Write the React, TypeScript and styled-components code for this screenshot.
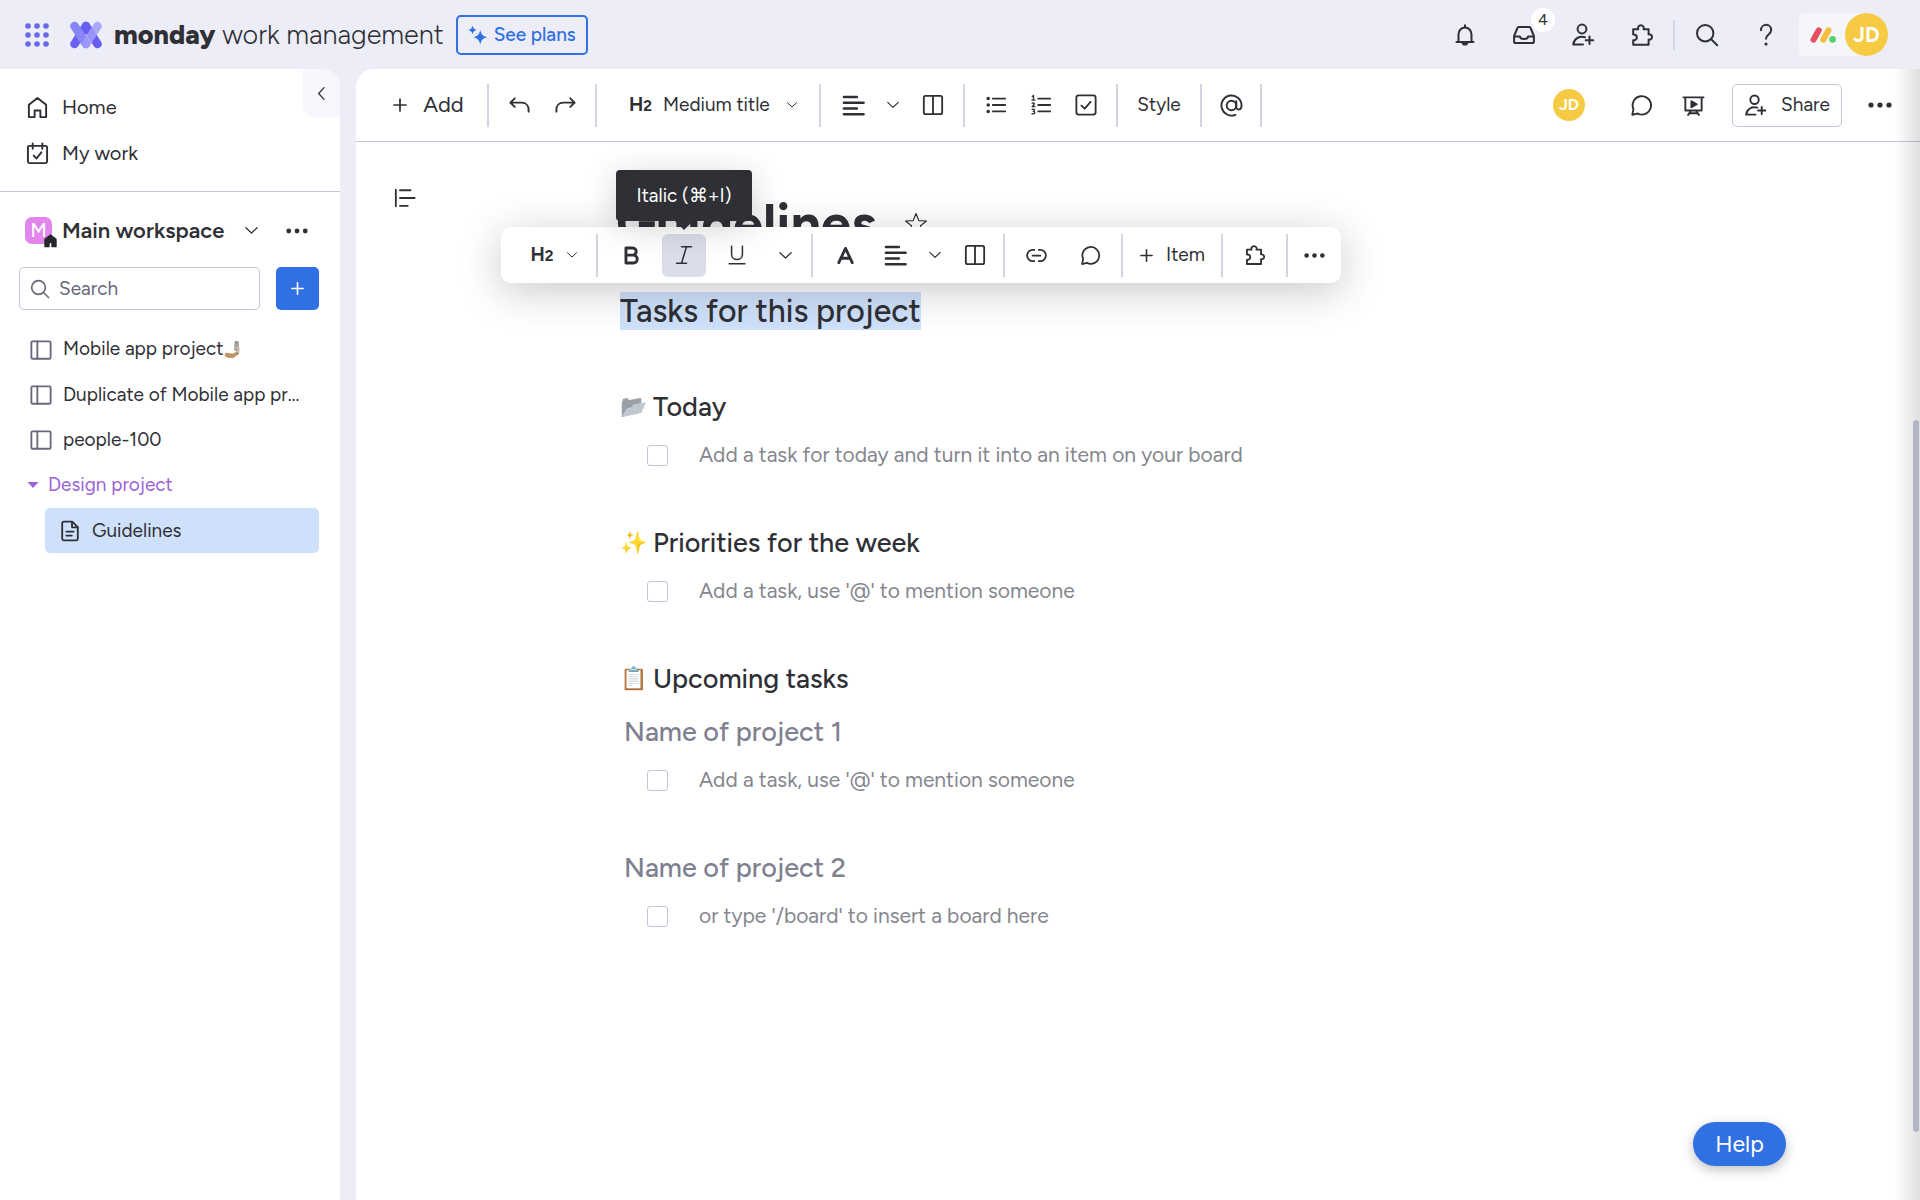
import React from "react";
import styled, { createGlobalStyle, css } from "styled-components";

const color = {
  ink: "#2f3035",
  muted: "#676879",
  placeholder: "#85868e",
  heading: "#7f8090",
  frame: "#ecedf7",
  line: "#d4d5e4",
  field: "#c3c5d9",
  blue: "#2f70e3",
  selected: "#cfe1fa",
  yellow: "#f6ca42",
  purple: "#9d63d6",
};

const GlobalStyle = createGlobalStyle`
  * { box-sizing: border-box; }
  body {
    margin: 0;
    font-family: Figtree, Lato, "Liberation Sans", sans-serif;
    font-size: 19px;
    line-height: 24px;
    font-variant-ligatures: none;
    color: ${color.ink};
    background: ${color.frame};
    -webkit-font-smoothing: antialiased;
  }
  button, input, select { font: inherit; color: inherit; }
  button { cursor: pointer; }
  h1, h2, h3, p { margin: 0; }
`;

/* ---------- icons ---------- */

const Svg = styled.svg<{ $size?: number }>`
  width: ${(p) => p.$size ?? 24}px;
  height: ${(p) => p.$size ?? 24}px;
  flex: none;
  display: block;
  fill: none;
  stroke: currentColor;
  stroke-width: 2;
  stroke-linecap: round;
  stroke-linejoin: round;
`;

type IconProps = { size?: number };
const icon =
  (body: React.ReactNode) =>
  ({ size }: IconProps) => (
    <Svg viewBox="0 0 24 24" $size={size} aria-hidden="true">
      {body}
    </Svg>
  );

const Dot = ({ x, y, r = 2 }: { x: number; y: number; r?: number }) => (
  <circle cx={x} cy={y} r={r} fill="currentColor" stroke="none" />
);

const BellIcon = icon(
  <>
    <path d="M3.5 19h17M5.5 19v-7.500a6.500 7 0 0 1 13 0V19M12 2.200v2" />
    <path d="M9.500 19.500c.4 2.600 4.600 2.600 5 0z" fill="currentColor" />
  </>
);
const InboxIcon = icon(
  <>
    <path d="M6.800 4h10.400a1.500 1.500 0 0 1 1.400 1l3.300 8v5.400a1.600 1.600 0 0 1-1.600 1.600H3.700a1.600 1.600 0 0 1-1.600-1.600V13l3.300-8a1.500 1.500 0 0 1 1.400-1z" />
    <path d="M2.400 13.400h5.400c.4 3.600 8 3.600 8.400 0h5.400" />
  </>
);
const InviteIcon = icon(
  <>
    <circle cx="11" cy="6" r="4.400" />
    <path d="M14 14.200c-6-1.400-11 1.400-11.800 7.300H12" />
    <path d="M18.500 13.500v7.600M14.700 17.300h7.600" />
  </>
);
const PuzzleIcon = icon(
  <path d="M3.200 6.200h5a2.900 2.900 0 1 1 5.400 0h5v5.200a2.700 2.700 0 1 1 0 5.200v5.200H3.200v-4.600a2.900 2.900 0 1 0 0-5.600z" />
);
const SearchIcon = icon(
  <>
    <circle cx="10.200" cy="10.200" r="8.200" />
    <path d="M16.200 16.200l6 6" />
  </>
);
const QuestionIcon = icon(
  <>
    <path d="M7 7.200C7.200 0 17.200.2 17.200 7c0 4.600-5.200 4.400-5.200 8.800" />
    <Dot x={12} y={21} r={1.6} />
  </>
);
const HomeIcon = icon(<path d="M3 22V9.200L12 2l9 7.200V22h-6v-6.800H9V22z" />);
const MyWorkIcon = icon(
  <>
    <rect x="2" y="4" width="20" height="18" rx="1.600" />
    <path d="M7 1.600V7M17 1.600V7M8 14.200l3 3 5-6.400" />
  </>
);
const ChevronDown = icon(<path d="M3 7.500l9 8.500 9-8.500" />);
const ChevronLeft = icon(<path d="M16 2.500L7.500 12l8.500 9.500" />);
const PlusIcon = icon(<path strokeWidth="2.600" d="M12 3v18M3 12h18" />);
const DotsIcon = icon(
  <>
    <Dot x={3} y={12} r={2.600} />
    <Dot x={12} y={12} r={2.600} />
    <Dot x={21} y={12} r={2.600} />
  </>
);
const BoardIcon = icon(
  <>
    <rect x="1.500" y="2.500" width="21" height="19" rx="1.400" />
    <path d="M8 2.500v19" />
  </>
);
const DocIcon = icon(
  <>
    <path d="M14.500 1.800H5.200c-1 0-1.700.7-1.700 1.700v17c0 1 .7 1.700 1.700 1.700h13.600c1 0 1.700-.7 1.700-1.700V7.800z" />
    <path d="M14.200 2v6h6M8 12.600h8M8 17h6" />
  </>
);
const UndoIcon = icon(<path d="M7 4.500L2.500 9 7 13.500M2.500 9h11.800c4.200 0 7.200 3 7.200 7.400v2" />);
const RedoIcon = icon(<path d="M17 4.500L21.500 9 17 13.500M21.500 9H9.700C5.500 9 2.500 12 2.500 16.400v2" />);
const AlignIcon = icon(
  <path strokeWidth="2.600" d="M2 3.200h13.500M2 9.200h20.500M2 15.200h13.500M2 21.200h20.500" />
);
const ColumnsIcon = icon(
  <>
    <rect x="2" y="2" width="20" height="20" rx="1.800" />
    <path d="M12 2v20" />
  </>
);
const BulletsIcon = icon(
  <>
    <Dot x={3.500} y={5} r={1.900} />
    <Dot x={3.500} y={12} r={1.900} />
    <Dot x={3.500} y={19} r={1.900} />
    <path d="M8.500 5H22M8.500 12H22M8.500 19H22" />
  </>
);
const NumbersIcon = icon(
  <>
    <path d="M9 5h13M9 12h13M9 19h13" />
    <path
      strokeWidth="1.500"
      d="M2.500 2.500l1.300-.8v5M2.200 6.700h3.200M2.400 10c2.600-1 3.200.600 0 3.800h3M2.300 16.800c3.400-.8 3 2 1.200 2.200 2.400 0 2.600 3.200-1.300 2.600"
    />
  </>
);
const CheckboxIcon = icon(
  <>
    <rect x="1.500" y="1.500" width="21" height="21" rx="2.600" />
    <path d="M7 12.600l3.600 3.400 6.400-7.400" />
  </>
);
const CommentIcon = icon(<path d="M3.600 15.800A9.600 9.600 0 1 1 8 20.400l-5.600 1.400z" />);
const PresentIcon = icon(
  <>
    <path d="M1.500 3.500h21M3.500 3.500v13.700h17V3.500M9.400 17.500l-3 4.300M14.600 17.500l3 4.300M9 20h6" />
    <path d="M9.800 7.600l5.600 3.100-5.600 3.100z" fill="currentColor" />
  </>
);
const MentionIcon = icon(
  <>
    <circle cx="12" cy="12" r="5" />
    <path d="M17 7.500v5.700c0 4.400 5.500 3.800 5.500-1.200A10.500 10.500 0 1 0 16 21.700" />
  </>
);
const OutlineIcon = icon(<path d="M2 3v18M6.500 3.500H18M6.500 12H22.500M6.500 20.500h8.500" />);
const StarIcon = icon(
  <path
    strokeWidth="1.200"
    d="M12 1.500l2.800 7.100 7.700.4-6 4.800 2.100 7.700-6.600-4.300-6.600 4.300 2.100-7.700-6-4.800 7.700-.4z"
  />
);
const ItalicIcon = icon(<path strokeWidth="1.800" d="M9 2h12M3 22h12M15 2L9 22" />);
const UnderlineIcon = icon(
  <path strokeWidth="1.800" d="M5.500 1.500v9.500c0 8.500 13 8.500 13 0V1.500M2.500 22.500h19" />
);
const BoldIcon = icon(
  <path strokeWidth="3.600" d="M5 2.500h8.500c6 0 6 9 0 9H5zM5 11.500h9.300c6.600 0 6.600 10 0 10H5z" />
);
const TextColorIcon = icon(<path strokeWidth="3.600" d="M3.500 21L12 3l8.500 18M7 15.500h10" />);
const LinkIcon = icon(
  <path d="M9.500 5.500H7.800a6.500 6.500 0 0 0 0 13h1.700M14.500 5.500h1.700a6.500 6.500 0 0 1 0 13h-1.700M7.500 12h9" />
);
const AppsIcon = () => (
  <Svg viewBox="0 0 24 24" aria-hidden="true">
    {[3, 12, 21].map((y) =>
      [3, 12, 21].map((x) => (
        <circle key={`${x}-${y}`} cx={x} cy={y} r={2.8} fill="#6c66ea" stroke="none" />
      ))
    )}
  </Svg>
);
const ProductLogo = () => (
  <Svg viewBox="0 0 34 34" $size={34} aria-hidden="true">
    <g strokeWidth="8.600">
      <path d="M17 8L5.500 26" stroke="#6a62ee" />
      <path d="M17 8l11.500 18" stroke="#655eee" />
      <path d="M5.500 8L17 26" stroke="#8885f6" />
      <path d="M28.500 8L17 26" stroke="#a09cfa" opacity=".85" />
    </g>
  </Svg>
);
const AccountLogo = () => (
  <Svg viewBox="0 0 26 16" $size={26} aria-hidden="true">
    <g strokeWidth="6">
      <path d="M3.500 12.700l5.300-9.400" stroke="#e5505f" />
      <path d="M13.200 12.700l5.300-9.400" stroke="#f4bd3c" />
    </g>
    <circle cx="22.600" cy="12.400" r="3.300" fill="#55d166" stroke="none" />
  </Svg>
);
const SparkleIcon = () => (
  <Svg viewBox="0 0 22 22" $size={20} aria-hidden="true">
    <g fill="currentColor" stroke="none">
      <path d="M13.500 5.500c1.100 5 2.600 6.600 7.500 8-4.900 1.400-6.400 3-7.500 8-1.100-5-2.600-6.600-7.500-8 4.900-1.400 6.400-3 7.500-8z" />
      <path d="M5 .5c.7 3 1.600 3.900 4.500 4.900C6.600 6.400 5.700 7.300 5 10.300 4.300 7.300 3.400 6.400.5 5.400 3.400 4.400 4.300 3.500 5 .5z" />
    </g>
  </Svg>
);
const HomeBadgeIcon = () => (
  <Svg viewBox="0 0 14 15" $size={15} aria-hidden="true">
    <path d="M7 2l5.500 4.200v7.300h-4v-4h-3v4h-4V6.200z" fill="#26272c" stroke="#26272c" strokeWidth="1.400" />
  </Svg>
);
const CaretIcon = () => (
  <Svg viewBox="0 0 12 12" $size={12} aria-hidden="true">
    <path d="M.5 3h11L6 9z" fill="currentColor" stroke="none" />
  </Svg>
);

/* ---------- shared parts ---------- */

const plain = css`
  display: flex;
  align-items: center;
  justify-content: center;
  padding: 0;
  border: 0;
  background: none;
`;

const IconButton = styled.button<{ $w?: number; $active?: boolean }>`
  ${plain}
  position: relative;
  flex: none;
  width: ${(p) => p.$w ?? 44}px;
  height: 43px;
  border-radius: 6px;
  background: ${(p) => (p.$active ? "#dcddea" : "none")};
`;

const Avatar = styled.span<{ $size: number; $text: number }>`
  display: grid;
  place-items: center;
  flex: none;
  width: ${(p) => p.$size}px;
  height: ${(p) => p.$size}px;
  border-radius: 50%;
  background: ${color.yellow};
  color: #fff;
  font-size: ${(p) => p.$text}px;
  font-weight: 700;
`;

const Separator = styled.span<{ $ml?: number; $mr?: number }>`
  flex: none;
  width: 2px;
  height: 43px;
  margin: 0 ${(p) => p.$mr ?? 0}px 0 ${(p) => p.$ml ?? 0}px;
  background: ${color.line};
`;

const Spacer = styled.span<{ $w?: number }>`
  width: ${(p) => p.$w ?? 9}px;
`;

const HeadingMark = styled.span`
  font-weight: 700;
  font-size: 19px;
  small { font-size: 15px; }
`;

/* ---------- header ---------- */

const Page = styled.div`
  display: flex;
  flex-direction: column;
  height: 100vh;
`;

const Header = styled.header`
  display: flex;
  align-items: center;
  justify-content: space-between;
  flex: none;
  height: 69px;
  padding: 0 32px 0 25px;
`;

const Group = styled.div<{ $gap?: number }>`
  display: flex;
  align-items: center;
  gap: ${(p) => p.$gap ?? 0}px;
`;

const AppsButton = styled.button`
  ${plain}
  margin-right: 20px;
`;

const Brand = styled.a`
  display: flex;
  align-items: center;
  gap: 11px;
  color: inherit;
  text-decoration: none;
  font-size: 27px;
  line-height: 36px;
  font-weight: 300;
  white-space: nowrap;
  b { font-weight: 800; }
`;

const PlansButton = styled.button`
  ${plain}
  gap: 6px;
  height: 40px;
  margin-left: 12px;
  padding: 0 10px;
  border: 2px solid ${color.blue};
  border-radius: 5px;
  color: ${color.blue};
  font-weight: 500;
`;

const HeaderButton = styled.button`
  ${plain}
  position: relative;
  width: 59px;
  height: 40px;
`;

const Badge = styled.span`
  position: absolute;
  top: -7px;
  right: -2px;
  display: grid;
  place-items: center;
  width: 24px;
  height: 24px;
  border-radius: 50%;
  background: #fff;
  font-size: 16px;
`;

const HeaderRule = styled.span`
  width: 2px;
  height: 30px;
  margin: 0 2px;
  background: #d3d7e8;
`;

const Account = styled.button`
  ${plain}
  gap: 9px;
  margin-left: 4px;
  padding-left: 11px;
  border-radius: 6px 24px 24px 6px;
  background: #f5f6fb;
`;

/* ---------- sidebar ---------- */

const Body = styled.div`
  display: flex;
  gap: 16px;
  flex: 1;
  min-height: 0;
`;

const Sidebar = styled.aside`
  flex: none;
  width: 340px;
  background: #fff;
  border-radius: 0 18px 0 0;
  overflow: hidden;
`;

const SidebarTop = styled.div`
  display: flex;
  align-items: flex-start;
  justify-content: space-between;
  height: 123px;
  border-bottom: 1px solid ${color.field};
`;

const MainNav = styled.nav`
  display: flex;
  flex-direction: column;
  padding: 15px 0 0 26px;
`;

const NavLink = styled.a`
  display: flex;
  align-items: center;
  gap: 13px;
  height: 46px;
  color: inherit;
  text-decoration: none;
  font-size: 20px;
`;

const Collapse = styled.button`
  ${plain}
  width: 37px;
  height: 48px;
  border-radius: 0 0 0 12px;
  background: #f6f7fc;
`;

const WorkspaceRow = styled.div`
  display: flex;
  align-items: center;
  height: 75px;
  padding: 2px 31px 0 25px;
`;

const WorkspaceButton = styled.button`
  ${plain}
  flex: 1;
  justify-content: flex-start;
  font-size: 22px;
  line-height: 28px;
  font-weight: 600;
  white-space: nowrap;
`;

const WorkspaceMark = styled.span`
  position: relative;
  display: grid;
  place-items: center;
  width: 27px;
  height: 27px;
  margin-right: 10px;
  border-radius: 7px;
  background: #e285ec;
  color: #fff;
  font-size: 19px;
  font-weight: 500;
`;

const HomeBadge = styled.span`
  position: absolute;
  right: -6px;
  bottom: -4px;
`;

const WorkspaceName = styled.span`
  margin-right: 20px;
`;

const SearchRow = styled.div`
  display: flex;
  gap: 16px;
  padding: 0 21px 0 19px;
`;

const SearchField = styled.label`
  display: flex;
  align-items: center;
  gap: 9px;
  flex: 1;
  min-width: 0;
  height: 43px;
  padding: 0 10px;
  border: 1px solid ${color.field};
  border-radius: 5px;
  color: ${color.muted};
  input {
    min-width: 0;
    width: 100%;
    padding: 0;
    border: 0;
    outline: 0;
    background: none;
  }
  input::placeholder { color: ${color.muted}; opacity: 1; }
`;

const AddBoard = styled.button`
  ${plain}
  flex: none;
  width: 43px;
  height: 43px;
  border-radius: 5px;
  background: ${color.blue};
  color: #fff;
`;

const BoardList = styled.nav`
  display: flex;
  flex-direction: column;
  padding: 17px 21px 0 20px;
`;

const BoardLink = styled.a<{ $selected?: boolean }>`
  display: flex;
  align-items: center;
  gap: 11px;
  height: 45px;
  margin-left: ${(p) => (p.$selected ? 25 : 0)}px;
  padding: 0 14px 0 ${(p) => (p.$selected ? 14 : 10)}px;
  border-radius: 5px;
  background: ${(p) => (p.$selected ? color.selected : "none")};
  color: inherit;
  text-decoration: none;
  svg { color: ${(p) => (p.$selected ? color.ink : color.muted)}; }
`;

const BoardName = styled.span`
  overflow: hidden;
  text-overflow: ellipsis;
  white-space: nowrap;
`;

const InlineEmoji = styled.span`
  display: inline-block;
  font-size: 16px;
  filter: grayscale(0.6);
`;

const Folder = styled.button`
  ${plain}
  justify-content: flex-start;
  gap: 9px;
  height: 46px;
  padding-left: 7px;
  color: ${color.purple};
`;

/* ---------- document ---------- */

const Main = styled.main`
  position: relative;
  display: flex;
  flex-direction: column;
  flex: 1;
  min-width: 0;
  background: #fff;
  border-radius: 18px 0 0 0;
  overflow: hidden;
`;

const Toolbar = styled.div`
  display: flex;
  align-items: center;
  justify-content: space-between;
  flex: none;
  height: 73px;
  padding: 0 18px 0 33px;
  border-bottom: 1px solid ${color.field};
`;

const AddButton = styled.button`
  ${plain}
  gap: 15px;
  width: 78px;
  font-size: 22px;
`;

const StyleSelect = styled.label`
  display: flex;
  align-items: center;
  gap: 11px;
  width: 170px;
  margin: 0 20px 0 32px;
  select {
    appearance: none;
    width: 112px;
    padding: 0;
    border: 0;
    background: none;
  }
`;

const TextButton = styled.button`
  ${plain}
  width: 82px;
  height: 43px;
`;

const ShareButton = styled.button`
  ${plain}
  gap: 14px;
  width: 110px;
  height: 43px;
  margin: 0 16px 0 17px;
  border: 1px solid ${color.field};
  border-radius: 5px;
`;

const Canvas = styled.div`
  display: flex;
  align-items: flex-start;
  flex: 1;
  min-height: 0;
`;

const OutlineButton = styled.button`
  ${plain}
  flex: none;
  width: 44px;
  height: 44px;
  margin: 34px 0 0 27px;
`;

const Article = styled.article`
  position: relative;
  flex: 1;
  min-width: 0;
  margin-right: 71px;
  padding: 48px 0 0 193px;
`;

const TitleRow = styled.div`
  display: flex;
  align-items: center;
  gap: 28px;
  margin-left: -4px;
  height: 68px;
`;

const Title = styled.h1`
  font-size: 54px;
  line-height: 68px;
  font-weight: 700;
`;

const Subtitle = styled.h2`
  margin: 34px 0 9px;
  font-size: 32px;
  line-height: 38px;
  font-weight: 500;
  span {
    display: inline-block;
    background: ${color.selected};
  }
`;

const Section = styled.section<{ $tight?: boolean }>`
  padding-top: ${(p) => (p.$tight ? 11 : 47)}px;
`;

const SectionHeading = styled.h3<{ $muted?: boolean }>`
  display: flex;
  align-items: center;
  gap: 6px;
  padding-left: ${(p) => (p.$muted ? 4 : 0)}px;
  font-size: 27px;
  line-height: 42px;
  font-weight: 500;
  color: ${(p) => (p.$muted ? color.heading : color.ink)};
`;

const Emoji = styled.span<{ $gray?: boolean }>`
  display: grid;
  place-items: center;
  width: 27px;
  font-size: 22px;
  filter: ${(p) => (p.$gray ? "grayscale(1) sepia(0.2) hue-rotate(165deg) brightness(0.85)" : "none")};
`;

const Task = styled.label`
  display: flex;
  align-items: center;
  gap: 31px;
  height: 40px;
  margin-top: 7px;
  padding-left: 27px;
  color: ${color.placeholder};
  font-size: 21px;
  line-height: 40px;
  input {
    appearance: none;
    flex: none;
    width: 21px;
    height: 21px;
    margin: 0;
    border: 1px solid ${color.field};
    border-radius: 3px;
    background: #fff;
  }
`;

const FloatingBar = styled.div`
  position: absolute;
  top: 85px;
  left: 74px;
  display: flex;
  align-items: center;
  height: 56px;
  padding: 0 5px 0 30px;
  border-radius: 10px;
  background: #fff;
  box-shadow: 0 8px 40px rgba(30, 31, 40, 0.24);
`;

const LevelSelect = styled.button`
  ${plain}
  gap: 13px;
  width: 47px;
  height: 43px;
`;

const ItemButton = styled.button`
  ${plain}
  gap: 12px;
  width: 98px;
  height: 43px;
`;

const Tooltip = styled.span`
  position: absolute;
  bottom: 56px;
  left: 50%;
  transform: translateX(-50%);
  width: 136px;
  height: 51px;
  border-radius: 4px;
  background: ${color.ink};
  color: #fff;
  line-height: 51px;
  text-align: center;
  box-shadow: 0 6px 32px rgba(30, 31, 40, 0.2);
  &::after {
    content: "";
    position: absolute;
    left: 50%;
    bottom: -9px;
    transform: translateX(-50%);
    border: solid transparent;
    border-width: 9px 9px 0;
    border-top-color: ${color.ink};
  }
`;

const HelpButton = styled.button`
  ${plain}
  position: absolute;
  right: 134px;
  bottom: 34px;
  width: 93px;
  height: 44px;
  border-radius: 22px;
  background: ${color.blue};
  color: #fff;
  font-size: 23px;
  box-shadow: 0 4px 12px rgba(30, 31, 40, 0.28);
`;

const EdgeShade = styled.div`
  position: absolute;
  inset: 0 0 0 auto;
  width: 26px;
  background: linear-gradient(to right, rgba(0, 0, 0, 0), rgba(0, 0, 0, 0.12));
  pointer-events: none;
`;

const ScrollThumb = styled.div`
  position: absolute;
  top: 31%;
  right: 1px;
  width: 6px;
  height: 63%;
  border-radius: 3px;
  background: #b3b4c6;
`;

const TaskRow = ({ text }: { text: string }) => (
  <Task>
    <input type="checkbox" />
    {text}
  </Task>
);

const H2Mark = () => (
  <HeadingMark>
    H<small>2</small>
  </HeadingMark>
);

const TopHeader = () => (
  <Header>
    <Group>
      <AppsButton aria-label="Apps"><AppsIcon /></AppsButton>
      <Brand href="#">
        <ProductLogo />
        <span><b>monday</b> work management</span>
      </Brand>
      <PlansButton><SparkleIcon />See plans</PlansButton>
    </Group>
    <Group>
      <HeaderButton aria-label="Notifications"><BellIcon /></HeaderButton>
      <HeaderButton aria-label="Inbox"><InboxIcon /><Badge>4</Badge></HeaderButton>
      <HeaderButton aria-label="Invite members"><InviteIcon /></HeaderButton>
      <HeaderButton aria-label="Apps marketplace"><PuzzleIcon /></HeaderButton>
      <HeaderRule />
      <HeaderButton aria-label="Search"><SearchIcon /></HeaderButton>
      <HeaderButton aria-label="Help"><QuestionIcon /></HeaderButton>
      <Account aria-label="Account">
        <AccountLogo />
        <Avatar $size={43} $text={21}>JD</Avatar>
      </Account>
    </Group>
  </Header>
);

const SideNav = () => (
  <Sidebar>
    <SidebarTop>
      <MainNav>
        <NavLink href="#"><HomeIcon size={23} />Home</NavLink>
        <NavLink href="#"><MyWorkIcon size={23} />My work</NavLink>
      </MainNav>
      <Collapse aria-label="Collapse sidebar"><ChevronLeft size={15} /></Collapse>
    </SidebarTop>
    <WorkspaceRow>
      <WorkspaceButton>
        <WorkspaceMark>M<HomeBadge><HomeBadgeIcon /></HomeBadge></WorkspaceMark>
        <WorkspaceName>Main workspace</WorkspaceName>
        <ChevronDown size={15} />
      </WorkspaceButton>
      <IconButton $w={24} aria-label="Workspace options"><DotsIcon size={22} /></IconButton>
    </WorkspaceRow>
    <SearchRow>
      <SearchField>
        <SearchIcon size={20} />
        <input type="text" placeholder="Search" aria-label="Search" />
      </SearchField>
      <AddBoard aria-label="Add item"><PlusIcon size={15} /></AddBoard>
    </SearchRow>
    <BoardList>
      <BoardLink href="#">
        <BoardIcon size={22} />
        <BoardName>Mobile app project<InlineEmoji>🤳🏼</InlineEmoji></BoardName>
      </BoardLink>
      <BoardLink href="#">
        <BoardIcon size={22} />
        <BoardName>Duplicate of Mobile app project</BoardName>
      </BoardLink>
      <BoardLink href="#">
        <BoardIcon size={22} />
        <BoardName>people-100</BoardName>
      </BoardLink>
      <Folder><CaretIcon />Design project</Folder>
      <BoardLink href="#" $selected>
        <DocIcon size={22} />
        <BoardName>Guidelines</BoardName>
      </BoardLink>
    </BoardList>
  </Sidebar>
);

const DocToolbar = () => (
  <Toolbar>
    <Group>
      <AddButton><PlusIcon size={16} />Add</AddButton>
      <Separator $ml={20} $mr={7} />
      <IconButton $w={46} aria-label="Undo"><UndoIcon size={23} /></IconButton>
      <IconButton $w={46} aria-label="Redo"><RedoIcon size={23} /></IconButton>
      <Separator $ml={7} />
      <StyleSelect>
        <H2Mark />
        <select aria-label="Text style" defaultValue="Medium title">
          <option>Medium title</option>
        </select>
        <ChevronDown size={12} />
      </StyleSelect>
      <Separator $mr={10} />
      <IconButton aria-label="Align"><AlignIcon size={23} /></IconButton>
      <IconButton $w={36} aria-label="Align options"><ChevronDown size={14} /></IconButton>
      <IconButton aria-label="Columns"><ColumnsIcon size={22} /></IconButton>
      <Separator $ml={8} $mr={8} />
      <IconButton $w={45} aria-label="Bulleted list"><BulletsIcon size={22} /></IconButton>
      <IconButton $w={45} aria-label="Numbered list"><NumbersIcon size={22} /></IconButton>
      <IconButton $w={45} aria-label="Checklist"><CheckboxIcon size={22} /></IconButton>
      <Separator $ml={8} />
      <TextButton>Style</TextButton>
      <Separator $mr={7} />
      <IconButton aria-label="Mention"><MentionIcon size={23} /></IconButton>
      <Separator $ml={7} />
    </Group>
    <Group>
      <Avatar $size={32} $text={16}>JD</Avatar>
      <Spacer $w={34} />
      <Group $gap={8}>
        <IconButton aria-label="Comments"><CommentIcon size={23} /></IconButton>
        <IconButton aria-label="Present"><PresentIcon size={23} /></IconButton>
      </Group>
      <ShareButton><InviteIcon size={23} />Share</ShareButton>
      <IconButton aria-label="More"><DotsIcon size={24} /></IconButton>
    </Group>
  </Toolbar>
);

const SelectionBar = () => (
  <FloatingBar role="toolbar" aria-label="Text formatting">
    <LevelSelect><H2Mark /><ChevronDown size={12} /></LevelSelect>
    <Separator $ml={18} $mr={11} />
    <IconButton aria-label="Bold"><BoldIcon size={19} /></IconButton>
    <Spacer />
    <IconButton $active aria-label="Italic">
      <ItalicIcon size={20} />
      <Tooltip role="tooltip">Italic (⌘+I)</Tooltip>
    </IconButton>
    <Spacer />
    <IconButton aria-label="Underline"><UnderlineIcon size={20} /></IconButton>
    <IconButton $w={52} aria-label="More text styles"><ChevronDown size={15} /></IconButton>
    <Separator $mr={10} />
    <IconButton aria-label="Text color"><TextColorIcon size={19} /></IconButton>
    <Spacer $w={6} />
    <IconButton aria-label="Align"><AlignIcon size={23} /></IconButton>
    <IconButton $w={36} aria-label="Align options"><ChevronDown size={14} /></IconButton>
    <IconButton aria-label="Columns"><ColumnsIcon size={22} /></IconButton>
    <Separator $ml={6} $mr={9} />
    <IconButton aria-label="Link"><LinkIcon size={21} /></IconButton>
    <Spacer $w={10} />
    <IconButton aria-label="Comment"><CommentIcon size={21} /></IconButton>
    <Separator $ml={9} />
    <ItemButton><PlusIcon size={15} />Item</ItemButton>
    <Separator />
    <IconButton $w={63} aria-label="Apps"><PuzzleIcon size={22} /></IconButton>
    <Separator $mr={4} />
    <IconButton aria-label="More"><DotsIcon size={21} /></IconButton>
  </FloatingBar>
);

export default function App() {
  return (
    <Page>
      <GlobalStyle />
      <TopHeader />
      <Body>
        <SideNav />
        <Main>
          <DocToolbar />
          <Canvas>
            <OutlineButton aria-label="Outline"><OutlineIcon size={22} /></OutlineButton>
            <Article>
              <TitleRow>
                <Title>Guidelines</Title>
                <StarIcon size={24} />
              </TitleRow>
              <Subtitle><span>Tasks for this project</span></Subtitle>
              <Section>
                <SectionHeading><Emoji $gray>📂</Emoji>Today</SectionHeading>
                <TaskRow text="Add a task for today and turn it into an item on your board" />
              </Section>
              <Section>
                <SectionHeading><Emoji>✨</Emoji>Priorities for the week</SectionHeading>
                <TaskRow text="Add a task, use '@' to mention someone" />
              </Section>
              <Section>
                <SectionHeading><Emoji>📋</Emoji>Upcoming tasks</SectionHeading>
              </Section>
              <Section $tight>
                <SectionHeading $muted>Name of project 1</SectionHeading>
                <TaskRow text="Add a task, use '@' to mention someone" />
              </Section>
              <Section>
                <SectionHeading $muted>Name of project 2</SectionHeading>
                <TaskRow text="or type '/board' to insert a board here" />
              </Section>
              <SelectionBar />
            </Article>
          </Canvas>
          <EdgeShade />
          <ScrollThumb />
          <HelpButton>Help</HelpButton>
        </Main>
      </Body>
    </Page>
  );
}
